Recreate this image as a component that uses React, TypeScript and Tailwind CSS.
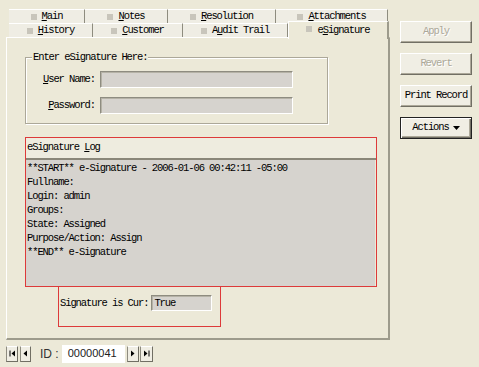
import React from "react";

const mono = "font-['Liberation_Mono',monospace] text-[10.5px] tracking-[-1.1px] text-black";

function Label({ pre, u, post }: { pre: string; u: string; post: string }) {
  return (
    <span className="whitespace-pre">
      {pre}
      <u className="underline underline-offset-1">{u}</u>
      {post}
    </span>
  );
}

function Tab({
  w,
  pre,
  u,
  post,
  selected,
}: {
  w: string;
  pre: string;
  u: string;
  post: string;
  selected?: boolean;
}) {
  if (selected) {
    return (
      <div
        className={`${w} relative z-10 -mt-[2px] h-[18px] bg-[#ece9d8] border-t border-l border-t-white border-l-white border-r-2 border-r-[#9d9b8c] flex items-start justify-center pt-[1px] gap-[5px]`}
      >
        <div className="w-[6px] h-[6px] bg-[#c8c5bb] mt-[3px]" />
        <Label pre={pre} u={u} post={post} />
      </div>
    );
  }
  return (
    <div
      className={`${w} h-full bg-[#efede4] border-t border-t-white border-r border-r-[#8e8c7f] flex items-center justify-center gap-[5px]`}
    >
      <div className="w-[6px] h-[6px] bg-[#c8c5bb]" />
      <Label pre={pre} u={u} post={post} />
    </div>
  );
}

const raised =
  "bg-[#f0eee4] border border-t-white border-l-white border-r-[#716f64] border-b-[#716f64] shadow-[inset_-1px_-1px_0_#aca899]";

const sunken =
  "bg-[#d6d3ce] border border-t-[#8e8c80] border-l-[#8e8c80] border-b-white border-r-white shadow-[inset_1px_1px_0_#b5b2a6]";

function NavBtn({ w, children }: { w: string; children: React.ReactNode }) {
  return (
    <div
      className={`${w} h-[16px] bg-[#f0eee4] border border-t-white border-l-[#8e8c80] border-r-[#716f64] border-b-[#716f64] flex items-center justify-center`}
    >
      {children}
    </div>
  );
}

export default function App() {
  return (
    <div className={`w-[479px] h-[367px] bg-[#ece9d8] flex overflow-hidden ${mono}`}>
      {/* left column */}
      <div className="w-[390px] flex flex-col">
        {/* tabs */}
        <div className="pt-[9px] pl-[9px] flex flex-col">
          <div className="flex h-[14px]">
            <Tab w="w-[76px]" pre="" u="M" post="ain" />
            <Tab w="w-[83px]" pre="" u="N" post="otes" />
            <Tab w="w-[108px]" pre="" u="R" post="esolution" />
            <Tab w="w-[112px]" pre="" u="A" post="ttachments" />
          </div>
          <div className="flex h-[14px] items-start">
            <Tab w="w-[84px]" pre="" u="H" post="istory" />
            <Tab w="w-[90px]" pre="" u="C" post="ustomer" />
            <Tab w="w-[105px]" pre="A" u="u" post="dit Trail" />
            <Tab w="w-[101px]" pre="e" u="S" post="ignature" selected />
          </div>
        </div>

        {/* panel */}
        <div className="ml-[6px] w-[384px] h-[303px] border-t border-l border-t-white border-l-white border-r-2 border-b-2 border-r-[#9d9b8c] border-b-[#9d9b8c] flex flex-col">
          {/* group box */}
          <div className="relative ml-[18px] mt-[19px] w-[303px] h-[67px] border border-[#aca899] shadow-[inset_1px_1px_0_#fff,1px_1px_0_#fff] flex flex-col pt-[13px]">
            <span className="absolute -top-[7px] left-[6px] bg-[#ece9d8] px-[1px] whitespace-pre leading-[12px]">
              Enter eSignature Here:
            </span>
            <div className="flex items-center h-[17px]">
              <div className="w-[71px] text-right pr-[2px]">
                <Label pre="" u="U" post="ser Name:" />
              </div>
              <div className={`ml-[3px] w-[193px] h-[17px] ${sunken}`} />
            </div>
            <div className="flex items-center h-[17px] mt-[9px]">
              <div className="w-[71px] text-right pr-[2px]">
                <Label pre="" u="P" post="assword:" />
              </div>
              <div className={`ml-[3px] w-[193px] h-[17px] ${sunken}`} />
            </div>
          </div>

          {/* log box */}
          <div className="ml-[18px] mt-[13px] w-[352px] h-[150px] border border-[#dd3a3a] flex flex-col">
            <div className="h-[20px] bg-[#eeecdf] flex items-center pl-[1px] shrink-0">
              <Label pre="eSignature " u="L" post="og" />
            </div>
            <div className="h-[2px] bg-[#8a8779] shrink-0" />
            <div className="flex-1 bg-[#d6d3ce] pl-[1px] pt-[1px] leading-[14px] whitespace-pre mr-[1px]">
              <div>**START** e-Signature - 2006-01-06 00:42:11 -05:00</div>
              <div>Fullname:</div>
              <div>Login: admin</div>
              <div>Groups:</div>
              <div>State: Assigned</div>
              <div>Purpose/Action: Assign</div>
              <div>**END** e-Signature</div>
            </div>
          </div>
          {/* signature box */}
          <div className="ml-[51px] w-[163px] h-[40px] border-x border-b border-[#dd3a3a] flex items-start pt-[8px] pl-[1px]">
            <span className="whitespace-pre leading-[16px]">Signature is Cur:</span>
            <div className={`ml-[3px] w-[61px] h-[16px] ${sunken} flex items-center pl-[2px] leading-[12px]`}>
              True
            </div>
          </div>
        </div>

        {/* nav */}
        <div className="mt-[5px] pl-[6px] flex items-center h-[17px]">
          <NavBtn w="w-[12px]">
            <svg width="7" height="7" viewBox="0 0 7 7">
              <rect x="0.5" y="0.5" width="1" height="6" fill="#000" />
              <path d="M6 0.5 L6 6.5 L2.5 3.5 Z" fill="#000" />
            </svg>
          </NavBtn>
          <div className="ml-[2px]">
            <NavBtn w="w-[11px]">
              <svg width="5" height="7" viewBox="0 0 5 7">
                <path d="M4 0.5 L4 6.5 L0.5 3.5 Z" fill="#000" />
              </svg>
            </NavBtn>
          </div>
          <span className="ml-[9px] font-['Liberation_Sans',sans-serif] text-[12px] tracking-normal text-[#333]">
            ID :
          </span>
          <div className="ml-[3px] w-[63px] h-[18px] bg-white flex items-center pl-[6px] font-['Liberation_Sans',sans-serif] text-[11px] tracking-normal text-[#222]">
            00000041
          </div>
          <div className="ml-[2px]">
            <NavBtn w="w-[12px]">
              <svg width="5" height="7" viewBox="0 0 5 7">
                <path d="M1 0.5 L1 6.5 L4.5 3.5 Z" fill="#000" />
              </svg>
            </NavBtn>
          </div>
          <div className="ml-[1px]">
            <NavBtn w="w-[13px]">
              <svg width="7" height="7" viewBox="0 0 7 7">
                <path d="M1 0.5 L1 6.5 L4.5 3.5 Z" fill="#000" />
                <rect x="5.5" y="0.5" width="1" height="6" fill="#000" />
              </svg>
            </NavBtn>
          </div>
        </div>
      </div>

      {/* right column */}
      <div className="pl-[10px] pt-[21px] flex flex-col gap-[10px]">
        <div className={`w-[72px] h-[22px] ${raised} flex items-center justify-center text-[#aca899] [text-shadow:1px_1px_0_#fff]`}>
          Apply
        </div>
        <div className={`w-[72px] h-[22px] ${raised} flex items-center justify-center text-[#aca899] [text-shadow:1px_1px_0_#fff]`}>
          Revert
        </div>
        <div className={`w-[72px] h-[22px] ${raised} flex items-center justify-center`}>Print Record</div>
        <div className="w-[72px] h-[22px] bg-[#f0eee4] border border-[#222] shadow-[inset_1px_1px_0_#fff,inset_-1px_-1px_0_#716f64,inset_-2px_-2px_0_#aca899] flex items-center justify-center gap-[4px]">
          <span>Actions</span>
          <svg width="7" height="4" viewBox="0 0 7 4">
            <path d="M0 0 L7 0 L3.5 4 Z" fill="#000" />
          </svg>
        </div>
      </div>
    </div>
  );
}
